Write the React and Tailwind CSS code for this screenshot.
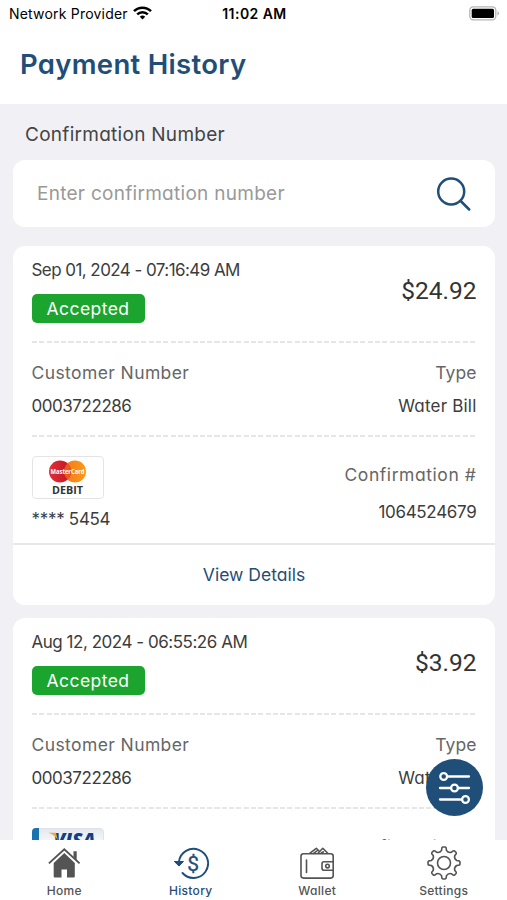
import React from 'react';

const payments = [
  {
    date: 'Sep 01, 2024 - 07:16:49 AM',
    dateClass: 'tracking-[-0.56px]',
    amount: '$24.92',
    customer: '0003722286',
    type: 'Water Bill',
    card: 'debit',
    last4: '5454',
    confirmation: '1064524679',
  },
  {
    date: 'Aug 12, 2024 - 06:55:26 AM',
    dateClass: 'tracking-[-0.47px]',
    amount: '$3.92',
    customer: '0003722286',
    type: 'Water Bill',
    card: 'visa',
    last4: '1111',
    confirmation: '1063987215',
  },
];

const DebitLogo = () => (
  <svg width="72" height="43" viewBox="0 0 72 43">
    <defs>
      <linearGradient id="mcRed" x1="0" x2="1">
        <stop offset="0" stopColor="#e0303a" />
        <stop offset="1" stopColor="#c3141f" />
      </linearGradient>
      <linearGradient id="mcOrange" x1="0" x2="1">
        <stop offset="0" stopColor="#f07a1c" />
        <stop offset="1" stopColor="#fb9a16" />
      </linearGradient>
    </defs>
    <rect x="0.5" y="0.5" width="71" height="42" rx="3.5" fill="#fff" stroke="#e4e4e4" />
    <circle cx="43" cy="15.5" r="11" fill="url(#mcOrange)" />
    <circle cx="28" cy="15.5" r="11" fill="url(#mcRed)" />
    <path d="M35.500 7.500a11 11 0 0 1 0 16a11 11 0 0 1 0-16" fill="#ea5a1e" />
    <text x="18.500" y="18.300" textLength="34" lengthAdjust="spacingAndGlyphs" fontSize="7.600" fontWeight="700" fontFamily="Open Sans, sans-serif" fill="#fff">
      MasterCard
    </text>
    <text x="20" y="38" textLength="31" lengthAdjust="spacingAndGlyphs" fontSize="11.200" fontWeight="700" fontFamily="Open Sans, sans-serif" fill="#333">
      DEBIT
    </text>
  </svg>
);

const VisaLogo = () => (
  <svg width="72" height="43" viewBox="0 0 72 43">
    <defs>
      <linearGradient id="visaBg" x1="0" x2="0" y1="0" y2="1">
        <stop offset="0" stopColor="#e4e8ee" />
        <stop offset="0.4" stopColor="#fafbfc" />
        <stop offset="1" stopColor="#eef0f3" />
      </linearGradient>
    </defs>
    <rect x="0.5" y="0.5" width="71" height="42" rx="3.5" fill="url(#visaBg)" stroke="#dfe2e6" />
    <path d="M4 0h3v43H4a4 4 0 0 1-4-4V4a4 4 0 0 1 4-4z" fill="#1a73ae" />
    <text x="21.500" y="18.500" textLength="42" lengthAdjust="spacingAndGlyphs" fontSize="18.500" fontWeight="800" fontStyle="italic" fontFamily="Open Sans, sans-serif" fill="#123f85">
      VISA
    </text>
    <path d="M16.500 4.700h7.500l2 8c-2-4-5-6.500-9.500-8z" fill="#f0a830" />
  </svg>
);

const Dashes = () => (
  <div className="h-[2px] bg-[repeating-linear-gradient(90deg,#e6e6e6_0,#e6e6e6_5px,transparent_5px,transparent_7.3px)]" />
);

const PaymentCard = ({ payment }) => (
  <div className="bg-white rounded-xl h-[359px] shrink-0 flex flex-col text-[17px] leading-6 text-[#3c3c3c]">
    <div className="px-[18.5px]">
      <div className="flex justify-between h-[95px]">
        <div className="pt-3">
          <p className={payment.dateClass}>{payment.date}</p>
          <span className="mt-3 flex w-[113px] h-[29px] items-center justify-center rounded-[5px] bg-[#1ba52f] text-white text-[17.5px] tracking-[0.45px]">
            Accepted
          </span>
        </div>
        <p className="pt-[30px] font-[Roboto] text-[24.5px] leading-[30px] text-[#333]">{payment.amount}</p>
      </div>
      <Dashes />
      <div className="flex justify-between h-[92px] pt-[18px]">
        <div>
          <p className="text-[#666] text-[17.5px] tracking-[0.4px]">Customer Number</p>
          <p className="mt-[9px] tracking-[-0.45px]">{payment.customer}</p>
        </div>
        <div className="text-right">
          <p className="text-[#666] text-[17.5px] tracking-[0.1px]">Type</p>
          <p className="mt-[9px] tracking-[0.2px]">{payment.type}</p>
        </div>
      </div>
      <Dashes />
      <div className="flex justify-between h-[106px] pt-[19px]">
        <div>
          {payment.card === 'debit' ? <DebitLogo /> : <VisaLogo />}
          <p className="mt-2 tracking-[-0.3px]">**** {payment.last4}</p>
        </div>
        <div className="text-right pt-[7px]">
          <p className="text-[#666] text-[17.5px] tracking-[0.57px]">Confirmation #</p>
          <p className="mt-[13px] tracking-[-0.3px]">{payment.confirmation}</p>
        </div>
      </div>
    </div>
    <button className="flex-1 border-t-2 border-[#e8e8ea] text-[#1f4e79] text-[17.5px] tracking-[0px]">View Details</button>
  </div>
);

const HomeIcon = () => (
  <svg width="34" height="34" viewBox="0 0 34 34" fill="#545454">
    <path d="M17.300 7 27.800 17v13.500a1 1 0 0 1-1 1H20v-8h-5.500v8H7.700a1 1 0 0 1-1-1V17z" />
    <path d="M1.900 17.400 17.300 3.200l15.300 14.200" fill="none" stroke="#545454" strokeWidth="1.900" />
    <path d="M26.500 5.300h3.200v9L26.500 11z" />
  </svg>
);

const HistoryIcon = () => (
  <svg width="36" height="34" viewBox="0 0 36 34" fill="none" stroke="#1f4e79" strokeWidth="1.900">
    <path d="M6 15.500A14.600 14.600 0 1 1 9.500 27" strokeLinecap="round" />
    <path d="M1.300 15.500h9.200L6 20z" fill="#1f4e79" strokeWidth="1" strokeLinejoin="round" />
    <text x="20.200" y="24.500" textAnchor="middle" fontSize="21" fontFamily="Roboto, sans-serif" fill="#1f4e79" stroke="#1f4e79" strokeWidth="0.300">
      $
    </text>
  </svg>
);

const WalletIcon = () => (
  <svg width="36" height="34" viewBox="0 0 36 34" fill="none" stroke="#545454" strokeWidth="1.600" strokeLinejoin="round" strokeLinecap="round">
    <rect x="2" y="7.800" width="32.200" height="24.300" rx="2.500" />
    <path d="M34.200 15.700H25a2 2 0 0 0-2 2v4.600a2 2 0 0 0 2 2h9.200" />
    <circle cx="28.500" cy="20.100" r="1.800" />
    <path d="M7.500 14v12.500" />
    <path d="M11 7.200 17.300 2.300 20 5M14.500 7.300l3.500-2.500M19 7.200l4.800-4.900 5 4.900M22 7.300l2.500-1.500" />
  </svg>
);

const polar = (deg, r) => {
  const rad = ((deg - 90) * Math.PI) / 180;
  return `${(17 + r * Math.cos(rad)).toFixed(2)} ${(17 + r * Math.sin(rad)).toFixed(2)}`;
};

// gear outline, eight teeth with rounded valleys
const gearPath =
  [0, 45, 90, 135, 180, 225, 270, 315]
    .map(
      (a) =>
        `${a === 0 ? 'M' : 'L'}${polar(a - 11, 12.9)} L${polar(a - 8, 15.3)} Q${polar(a - 6, 16)} ${polar(a - 4, 16)} L${polar(a + 4, 16)} Q${polar(a + 6, 16)} ${polar(a + 8, 15.3)} L${polar(a + 11, 12.9)} Q${polar(a + 22.5, 10.8)} ${polar(a + 34, 12.9)}`,
    )
    .join(' ') + 'Z';

const SettingsIcon = () => (
  <svg width="34" height="34" viewBox="0 0 34 34" fill="none" stroke="#545454" strokeWidth="1.600" strokeLinejoin="round">
    <path d={gearPath} />
    <circle cx="17" cy="17" r="6.500" />
  </svg>
);

const tabs = [
  { label: 'Home', icon: <HomeIcon />, labelClass: 'text-[#545454]' },
  { label: 'History', icon: <HistoryIcon />, labelClass: 'text-[#1f4e79]' },
  { label: 'Wallet', icon: <WalletIcon />, labelClass: 'text-[#545454]' },
  { label: 'Settings', icon: <SettingsIcon />, labelClass: 'text-[#545454]' },
];

const StatusBar = () => (
  <div className="grid grid-cols-3 items-center h-7 pl-[9px] pr-[7px] text-sm text-black">
    <div className="flex items-center gap-[5px]">
      <span className="tracking-[0.2px] whitespace-nowrap">Network Provider</span>
      <svg className="shrink-0 -mt-[3px]" width="19" height="14" viewBox="0 0 19 14" fill="none" stroke="#000" strokeWidth="2.500">
        <path d="M1 5.200a12 12 0 0 1 17 0M4.200 8.400a7.500 7.500 0 0 1 10.600 0" />
        <path d="M6.800 10.800a3.800 3.800 0 0 1 5.400 0L9.500 13.500z" fill="#000" stroke="none" />
      </svg>
    </div>
    <span className="text-center font-semibold tracking-[0.45px]">11:02 AM</span>
    <svg className="justify-self-end -mt-[2px]" width="31" height="15" viewBox="0 0 31 15">
      <rect x="0.800" y="0.800" width="26" height="13" rx="3.500" fill="#fff" stroke="#b5b5b5" strokeWidth="1.300" />
      <rect x="2.700" y="2.700" width="22.300" height="9.200" rx="1.500" fill="#000" />
      <path d="M28.500 5.200c2 .9 2 3.300 0 4.200z" fill="#aaa" />
    </svg>
  </div>
);

const App = () => {
  return (
    <div className="relative w-[507px] h-[900px] overflow-hidden flex flex-col bg-[#f1f1f5] font-[Inter,sans-serif] [font-feature-settings:'cv11']">
      <header className="h-[104px] shrink-0 bg-white">
        <StatusBar />
        <h1 className="pl-5 pt-5 text-[27.5px] leading-8 font-semibold tracking-[0.3px] text-[#1f4e79]">Payment History</h1>
      </header>
      <main className="flex-1 min-h-0 overflow-hidden flex flex-col pl-[13px] pr-3">
        <label className="pl-3 pt-[19px] h-14 shrink-0 text-[19px] leading-6 tracking-[0.28px] text-[#444]">Confirmation Number</label>
        <div className="h-[67px] shrink-0 mb-[19px] bg-white rounded-xl flex items-center justify-between pl-6 pr-[23px]">
          <span className="pt-[2px] text-[19px] tracking-[0.28px] text-[#999]">Enter confirmation number</span>
          <svg width="36" height="36" viewBox="0 0 36 36" fill="none" stroke="#1f4e79" strokeWidth="2.500" strokeLinecap="round">
            <circle cx="15.200" cy="15.500" r="13" />
            <path d="m24.700 25 8.500 8.500" />
          </svg>
        </div>
        <div className="flex flex-col gap-[13px]">
          {payments.map((payment, idx) => (
            <PaymentCard key={idx} payment={payment} />
          ))}
        </div>
      </main>
      <nav className="h-[60px] shrink-0 bg-white grid grid-cols-4 pl-px">
        {tabs.map((tab) => (
          <div key={tab.label} className="flex flex-col items-center pt-[6px]">
            {tab.icon}
            <span className={`text-[12px] leading-[18px] mt-[2px] font-medium tracking-[0.3px] ${tab.labelClass}`}>{tab.label}</span>
          </div>
        ))}
      </nav>
      <button className="absolute left-[426px] top-[759px] w-[57px] h-[57px] rounded-full bg-[#1f4e79] flex items-center justify-center">
        <svg width="34" height="34" viewBox="0 0 34 34" fill="none" stroke="#fff" strokeWidth="2.300" strokeLinecap="round">
          <path d="M9.500 5.500H31M2 17h10.500M20 17h11M2 28.500h21.500" />
          <circle cx="5.700" cy="5.500" r="3.400" />
          <circle cx="16.500" cy="17" r="3.400" />
          <circle cx="27.500" cy="28.500" r="3.400" />
        </svg>
      </button>
    </div>
  );
};

export default App;
